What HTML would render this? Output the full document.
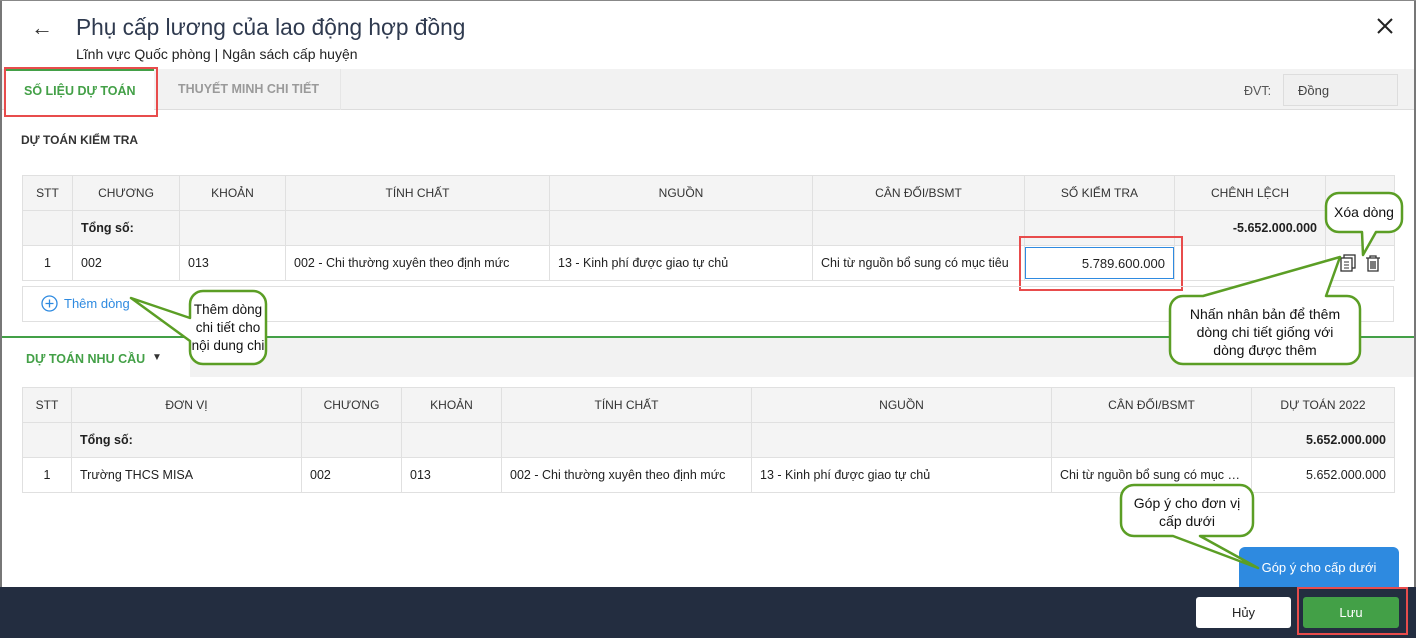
<!DOCTYPE html>
<html><head><meta charset="utf-8"><style>
*{box-sizing:border-box;margin:0;padding:0}
body{width:1416px;height:638px;overflow:hidden;background:#fff;font-family:"Liberation Sans",sans-serif;position:relative;color:#212121;font-size:13px}
.abs{position:absolute}
table{border-collapse:collapse;position:absolute;table-layout:fixed}
td{border:1px solid #e0e0e0;height:35px;padding:0 8px;font-size:12.5px;white-space:nowrap;overflow:hidden}
tr.h td{background:#f4f4f4;text-align:center;color:#333;font-size:12px}
tr.t td{background:#f4f4f4}
.c{text-align:center}.r{text-align:right}
.callout{position:absolute;font-size:14px;color:#111;text-align:center;line-height:18px;white-space:nowrap}
</style></head><body>
<div class="abs" style="left:0;top:0;width:2px;height:638px;background:#777"></div>
<div class="abs" style="left:1414px;top:0;width:2px;height:638px;background:#777"></div>
<div class="abs" style="left:0;top:0;width:1416px;height:1px;background:#888"></div>
<div class="abs" style="left:31px;top:15px;font-size:22px;color:#333">←</div>
<div class="abs" style="left:76px;top:14px;font-size:22.7px;color:#2f3a4f">Phụ cấp lương của lao động hợp đồng</div>
<div class="abs" style="left:76px;top:46px;font-size:14px;color:#222">Lĩnh vực Quốc phòng | Ngân sách cấp huyện</div>
<svg class="abs" style="left:1376px;top:17px" width="18" height="18"><path d="M2 2L16 16M16 2L2 16" stroke="#222" stroke-width="2"/></svg>
<div class="abs" style="left:2px;top:69px;width:1412px;height:41px;background:#f2f2f2;border-bottom:1px solid #ddd"></div>
<div class="abs" style="left:4px;top:69px;width:150px;height:42px;background:#fff;border-top:2px solid #43a047"></div>
<div class="abs" style="left:4px;top:67px;width:154px;height:50px;border:2px solid #e84c4c"></div>
<div class="abs" style="left:24px;top:84px;font-size:12.5px;color:#43a047;font-weight:bold">SỐ LIỆU DỰ TOÁN</div>
<div class="abs" style="left:178px;top:82px;font-size:12.5px;color:#9a9a9a;font-weight:bold">THUYẾT MINH CHI TIẾT</div>
<div class="abs" style="left:340px;top:69px;width:1px;height:41px;background:#e6e6e6"></div>
<div class="abs" style="left:1244px;top:84px;font-size:12.5px;color:#555">ĐVT:</div>
<div class="abs" style="left:1283px;top:74px;width:115px;height:32px;background:#f0f0f0;border:1px solid #ddd;padding:8px 14px;font-size:13px;color:#444">Đồng</div>
<div class="abs" style="left:21px;top:133px;font-size:12px;color:#333;font-weight:bold">DỰ TOÁN KIỂM TRA</div>
<table style="left:22px;top:175px;width:1372px">
<colgroup><col style="width:50px"><col style="width:107px"><col style="width:106px"><col style="width:264px"><col style="width:263px"><col style="width:212px"><col style="width:150px"><col style="width:151px"><col style="width:69px"></colgroup>
<tr class="h"><td>STT</td><td>CHƯƠNG</td><td>KHOẢN</td><td>TÍNH CHẤT</td><td>NGUỒN</td><td>CÂN ĐỐI/BSMT</td><td>SỐ KIỂM TRA</td><td>CHÊNH LỆCH</td><td></td></tr>
<tr class="t"><td></td><td style="font-weight:bold">Tổng số:</td><td></td><td></td><td></td><td></td><td></td><td class="r" style="font-weight:bold">-5.652.000.000</td><td></td></tr>
<tr><td class="c">1</td><td>002</td><td>013</td><td>002 - Chi thường xuyên theo định mức</td><td>13 - Kinh phí được giao tự chủ</td><td>Chi từ nguồn bổ sung có mục tiêu</td><td></td><td></td><td></td></tr>
</table>
<div class="abs" style="left:1025px;top:247px;width:149px;height:32px;border:1px solid #2e8ae0;background:#fff;text-align:right;padding:8px 8px;font-size:13px">5.789.600.000</div>
<div class="abs" style="left:1019px;top:236px;width:164px;height:55px;border:2px solid #e84c4c"></div>
<svg class="abs" style="left:1339px;top:254px" width="18" height="18"><rect x="5" y="1" width="11" height="13" fill="none" stroke="#333" stroke-width="1.3"/><rect x="2" y="4" width="11" height="13" fill="#fff" stroke="#333" stroke-width="1.3"/><path d="M5 8h5M5 11h5M5 14h5" stroke="#333"/></svg>
<svg class="abs" style="left:1365px;top:254px" width="16" height="18"><path d="M1 4h14M5 4V2h6v2M3 4v13h10V4M6 7v8M8 7v8M10 7v8" fill="none" stroke="#333" stroke-width="1.3"/></svg>
<div class="abs" style="left:22px;top:286px;width:1372px;height:36px;border:1px solid #e0e0e0"></div>
<svg class="abs" style="left:41px;top:295px" width="17" height="17"><circle cx="8.5" cy="8.5" r="7.5" fill="none" stroke="#2e8ae0" stroke-width="1.3"/><path d="M8.5 4.5v8M4.5 8.5h8" stroke="#2e8ae0" stroke-width="1.3"/></svg>
<div class="abs" style="left:64px;top:296px;font-size:13px;color:#2e8ae0">Thêm dòng</div>
<div class="abs" style="left:190px;top:337px;width:1224px;height:40px;background:#f2f2f2"></div>
<div class="abs" style="left:2px;top:336px;width:1412px;height:2px;background:#43a047"></div>
<div class="abs" style="left:26px;top:352px;font-size:12.5px;color:#43a047;font-weight:bold">DỰ TOÁN NHU CẦU</div>
<div class="abs" style="left:152px;top:352px;font-size:10px;color:#333">▼</div>
<table style="left:22px;top:387px;width:1372px">
<colgroup><col style="width:49px"><col style="width:230px"><col style="width:100px"><col style="width:100px"><col style="width:250px"><col style="width:300px"><col style="width:200px"><col style="width:143px"></colgroup>
<tr class="h"><td>STT</td><td>ĐƠN VỊ</td><td>CHƯƠNG</td><td>KHOẢN</td><td>TÍNH CHẤT</td><td>NGUỒN</td><td>CÂN ĐỐI/BSMT</td><td>DỰ TOÁN 2022</td></tr>
<tr class="t"><td></td><td style="font-weight:bold">Tổng số:</td><td></td><td></td><td></td><td></td><td></td><td class="r" style="font-weight:bold">5.652.000.000</td></tr>
<tr><td class="c">1</td><td>Trường THCS MISA</td><td>002</td><td>013</td><td>002 - Chi thường xuyên theo định mức</td><td>13 - Kinh phí được giao tự chủ</td><td style="text-overflow:ellipsis">Chi từ nguồn bổ sung có mục tiêu</td><td class="r">5.652.000.000</td></tr>
</table>
<div class="abs" style="left:1239px;top:547px;width:160px;height:42px;background:#2e8ae0;border-radius:6px 6px 0 0;color:#fff;font-size:13px;text-align:center;padding-top:13px">Góp ý cho cấp dưới</div>
<div class="abs" style="left:0;top:587px;width:1416px;height:51px;background:#232d40"></div>
<div class="abs" style="left:1196px;top:597px;width:95px;height:31px;background:#fff;border-radius:3px;text-align:center;padding-top:8px;font-size:13px">Hủy</div>
<div class="abs" style="left:1303px;top:597px;width:96px;height:31px;background:#43a047;border-radius:3px;text-align:center;padding-top:8px;font-size:13px;color:#fff">Lưu</div>
<div class="abs" style="left:1297px;top:587px;width:111px;height:48px;border:2px solid #e84c4c"></div>
<svg class="abs" style="left:0;top:0" width="1416" height="638">
<g fill="#fff" stroke="#5b9e25" stroke-width="2.5" stroke-linejoin="round">
<path d="M203 291h50a13 13 0 0 1 13 13v47a13 13 0 0 1-13 13h-50a13 13 0 0 1-13-13v-10L131 298l59 20v-14a13 13 0 0 1 13-13z"/>
<path d="M1339 193h50a13 13 0 0 1 13 13v13a13 13 0 0 1-13 13h-13l-13 23l-1-23h-23a13 13 0 0 1-13-13v-13a13 13 0 0 1 13-13z"/>
<path d="M1183 296h20l137-39l-14 39h21a13 13 0 0 1 13 13v42a13 13 0 0 1-13 13h-164a13 13 0 0 1-13-13v-42a13 13 0 0 1 13-13z"/>
<path d="M1134 485h106a13 13 0 0 1 13 13v25a13 13 0 0 1-13 13h-40l58 32l-85-32h-39a13 13 0 0 1-13-13v-25a13 13 0 0 1 13-13z"/>
</g></svg>
<div class="callout" style="left:188px;top:301px;width:80px;font-size:13.5px">Thêm dòng<br>chi tiết cho<br>nội dung chi</div>
<div class="callout" style="left:1326px;top:203px;width:76px">Xóa dòng</div>
<div class="callout" style="left:1170px;top:305px;width:190px">Nhấn nhân bản để thêm<br>dòng chi tiết giống với<br>dòng được thêm</div>
<div class="callout" style="left:1121px;top:494px;width:132px">Góp ý cho đơn vị<br>cấp dưới</div>
</body></html>
